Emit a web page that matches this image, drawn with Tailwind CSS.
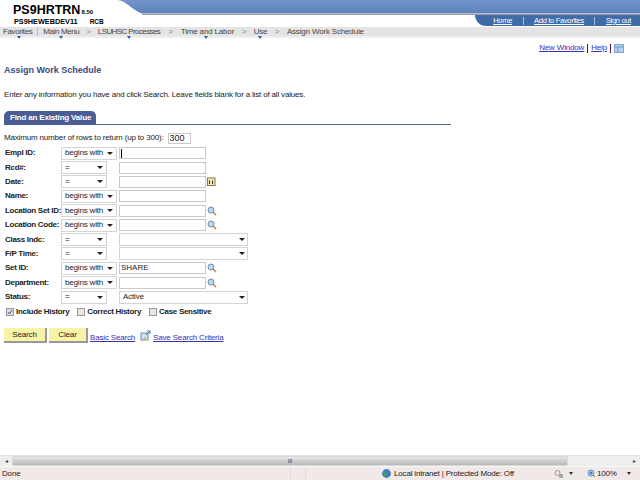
<!DOCTYPE html>
<html>
<head>
<meta charset="utf-8">
<script src="https://cdn.jsdelivr.net/npm/@tailwindcss/browser@4"></script>
</head>
<body class="m-0 bg-white">
<div class="w-[640px] h-[480px] overflow-hidden flex flex-col font-['Liberation_Sans',Arial,sans-serif] text-[8px] tracking-[-0.17px] text-[#222] relative">
  <!-- header -->
  <header class="h-[27px] relative shrink-0">
    <div class="absolute left-[112px] top-0 right-0 h-[15px]">
      <svg width="528" height="16" class="block"><defs><linearGradient id="g" x1="0" y1="0" x2="0" y2="1"><stop offset="0" stop-color="#7395ca"/><stop offset="0.5" stop-color="#668cc4"/><stop offset="1" stop-color="#5f82b6"/></linearGradient></defs><path d="M6 0 C 14 1 20 10 30 13.5 L528 13.5 L528 0 Z" fill="url(#g)"/><path d="M30 14.5 L528 14.5" stroke="#9a9aa8" stroke-width="1"/></svg>
    </div>
    <div class="absolute left-[13px] top-[3px] font-bold text-[12.5px] tracking-normal leading-[14px] text-black">PS9HRTRN<span class="text-[6px] ml-px">8.50</span></div>
    <div class="absolute left-[14px] top-[17px] font-bold text-[7.3px] tracking-normal leading-[9px] text-black flex gap-[12px]"><span>PS9HEWEBDEV11</span><span class="text-[6.5px]">RCB</span></div>
    <nav class="absolute left-[475px] top-[15px] w-[165px] h-[11px] bg-[#3f6ca6] rounded-bl-[11px] flex items-center justify-end pr-[9px] text-[7.5px] tracking-[-0.3px] leading-[10px] text-white whitespace-nowrap">
      <a class="underline">Home</a>
      <span class="w-px h-[8px] bg-[#a9c0dd] mx-[10.5px]"></span>
      <a class="underline">Add to Favorites</a>
      <span class="w-px h-[8px] bg-[#a9c0dd] mx-[10.5px]"></span>
      <a class="underline">Sign out</a>
    </nav>
  </header>
  <!-- breadcrumb -->
  <div class="h-[9px] shrink-0 bg-[#e4e4e4] border-b-[2px] border-[#eeeeee] box-content flex items-center pl-[3px] leading-[9px] text-[#444] whitespace-nowrap">
    <span class="relative tracking-[-0.4px]">Favorites<i class="absolute left-[14px] top-[9px] border-x-[2px] border-t-[3px] border-x-transparent border-t-[#2d5f9e]"></i></span>
    <span class="w-px h-[9px] bg-[#bbb] mx-[5px]"></span>
    <span class="relative tracking-[-0.4px]">Main Menu<i class="absolute left-[16px] top-[9px] border-x-[2px] border-t-[3px] border-x-transparent border-t-[#2d5f9e]"></i></span>
    <span class="mx-[7px] text-[#888]">&gt;</span>
    <span class="relative tracking-[-0.6px]">LSUHSC Processes<i class="absolute left-[29px] top-[9px] border-x-[2px] border-t-[3px] border-x-transparent border-t-[#2d5f9e]"></i></span>
    <span class="mx-[8px] text-[#888]">&gt;</span>
    <span class="relative">Time and Labor<i class="absolute left-[23px] top-[9px] border-x-[2px] border-t-[3px] border-x-transparent border-t-[#2d5f9e]"></i></span>
    <span class="mx-[7.5px] text-[#888]">&gt;</span>
    <span class="relative">Use<i class="absolute left-[4px] top-[9px] border-x-[2px] border-t-[3px] border-x-transparent border-t-[#2d5f9e]"></i></span>
    <span class="mx-[7.5px] text-[#888]">&gt;</span>
    <span>Assign Work Schedule</span>
  </div>
  <!-- main -->
  <main class="flex-1 min-h-0">
    <div class="h-[14px] mt-[3px] flex justify-end items-center pr-[16px] text-[#3a2fb0]">
      <a class="underline">New Window</a><span class="w-px h-[9px] bg-[#514] mx-[3px]"></span><a class="underline">Help</a><span class="w-px h-[9px] bg-[#514] mx-[3px]"></span>
      <svg width="10" height="9" viewBox="0 0 10 9"><rect x=".5" y=".5" width="9" height="8" fill="#b8d0ea" stroke="#7fa3cf"/><path d="M1 3H9M4 3V8" stroke="#6f97c9"/></svg>
    </div>
    <h1 class="ml-[4px] mt-[10px] font-bold text-[9px] tracking-normal leading-[11px] text-[#3a4a80]">Assign Work Schedule</h1>
    <p class="ml-[4px] mt-[13px] leading-[11px] text-[#222] whitespace-nowrap">Enter any information you have and click Search. Leave fields blank for a list of all values.</p>
    <div class="mt-[11px] ml-[4px] w-[447px] border-b border-[#5b6a95] h-[14px]">
      <div class="w-[92px] h-[14px] bg-[#4c5d96] rounded-t-[5px] rounded-br-[1px] flex items-center pl-[6px] font-bold text-white whitespace-nowrap">Find an Existing Value</div>
    </div>
    <div class="mt-[7px] ml-[4px] h-[12px] flex items-center whitespace-nowrap">Maximum number of rows to return (up to 300):<span class="ml-[4px] w-[23px] h-[11px] border border-[#c9c9c9] pl-[1px] flex items-center text-[9px] tracking-normal leading-[9px]">300</span></div>
    <form class="mt-[2px] ml-[5px] grid grid-cols-[56px_58px_1fr] auto-rows-[14.4px] items-center w-[260px] font-bold tracking-[-0.3px] leading-[10px] whitespace-nowrap">
      <label>Empl ID:</label><div class="w-[56px] h-[13px] border border-[#d4d4d4] flex items-center justify-between px-[3px] font-normal tracking-[-0.17px]">begins with<i class="border-x-[3px] border-t-[3px] border-x-transparent border-t-[#222]"></i></div><div class="flex items-center gap-[2px]"><span class="w-[87px] h-[12px] border border-[#c9c9c9] font-normal flex items-center"><span class="w-px h-[9px] bg-black ml-[1px]"></span></span></div>
      <label>Rcd#:</label><div class="w-[46px] h-[13px] border border-[#d4d4d4] flex items-center justify-between px-[3px] font-normal">=<i class="border-x-[3px] border-t-[3px] border-x-transparent border-t-[#222]"></i></div><div><span class="block w-[87px] h-[12px] border border-[#c9c9c9]"></span></div>
      <label>Date:</label><div class="w-[46px] h-[13px] border border-[#d4d4d4] flex items-center justify-between px-[3px] font-normal">=<i class="border-x-[3px] border-t-[3px] border-x-transparent border-t-[#222]"></i></div><div class="flex items-center gap-[1px]"><span class="w-[87px] h-[12px] border border-[#c9c9c9]"></span><svg width="9" height="9" viewBox="0 0 9 9"><rect x=".5" y="1" width="7.5" height="7.5" fill="#f0e6b8" stroke="#8a7a3a"/><path d="M2.5 3.5V7M5.5 3.5V7" stroke="#333"/></svg></div>
      <label>Name:</label><div class="w-[56px] h-[13px] border border-[#d4d4d4] flex items-center justify-between px-[3px] font-normal tracking-[-0.17px]">begins with<i class="border-x-[3px] border-t-[3px] border-x-transparent border-t-[#222]"></i></div><div><span class="block w-[87px] h-[12px] border border-[#c9c9c9]"></span></div>
      <label>Location Set ID:</label><div class="w-[56px] h-[13px] border border-[#d4d4d4] flex items-center justify-between px-[3px] font-normal tracking-[-0.17px]">begins with<i class="border-x-[3px] border-t-[3px] border-x-transparent border-t-[#222]"></i></div><div class="flex items-center gap-[1px]"><span class="w-[87px] h-[12px] border border-[#c9c9c9]"></span><svg width="10" height="10" viewBox="0 0 10 10"><circle cx="4" cy="4" r="3" fill="#bcd6f0" stroke="#6f8fb5"/><path d="M6 6L9 9" stroke="#c08a3a" stroke-width="1.6"/></svg></div>
      <label>Location Code:</label><div class="w-[56px] h-[13px] border border-[#d4d4d4] flex items-center justify-between px-[3px] font-normal tracking-[-0.17px]">begins with<i class="border-x-[3px] border-t-[3px] border-x-transparent border-t-[#222]"></i></div><div class="flex items-center gap-[1px]"><span class="w-[87px] h-[12px] border border-[#c9c9c9]"></span><svg width="10" height="10" viewBox="0 0 10 10"><circle cx="4" cy="4" r="3" fill="#bcd6f0" stroke="#6f8fb5"/><path d="M6 6L9 9" stroke="#c08a3a" stroke-width="1.6"/></svg></div>
      <label>Class Indc:</label><div class="w-[46px] h-[13px] border border-[#d4d4d4] flex items-center justify-between px-[3px] font-normal">=<i class="border-x-[3px] border-t-[3px] border-x-transparent border-t-[#222]"></i></div><div class="w-[129px] h-[13px] border border-[#d4d4d4] flex items-center justify-end px-[2px]"><i class="border-x-[3px] border-t-[3px] border-x-transparent border-t-[#222]"></i></div>
      <label>F/P Time:</label><div class="w-[46px] h-[13px] border border-[#d4d4d4] flex items-center justify-between px-[3px] font-normal">=<i class="border-x-[3px] border-t-[3px] border-x-transparent border-t-[#222]"></i></div><div class="w-[129px] h-[13px] border border-[#d4d4d4] flex items-center justify-end px-[2px]"><i class="border-x-[3px] border-t-[3px] border-x-transparent border-t-[#222]"></i></div>
      <label>Set ID:</label><div class="w-[56px] h-[13px] border border-[#d4d4d4] flex items-center justify-between px-[3px] font-normal tracking-[-0.17px]">begins with<i class="border-x-[3px] border-t-[3px] border-x-transparent border-t-[#222]"></i></div><div class="flex items-center gap-[1px]"><span class="w-[87px] h-[12px] border border-[#c9c9c9] font-normal tracking-normal pl-[1px] flex items-center">SHARE</span><svg width="10" height="10" viewBox="0 0 10 10"><circle cx="4" cy="4" r="3" fill="#bcd6f0" stroke="#6f8fb5"/><path d="M6 6L9 9" stroke="#c08a3a" stroke-width="1.6"/></svg></div>
      <label>Department:</label><div class="w-[56px] h-[13px] border border-[#d4d4d4] flex items-center justify-between px-[3px] font-normal tracking-[-0.17px]">begins with<i class="border-x-[3px] border-t-[3px] border-x-transparent border-t-[#222]"></i></div><div class="flex items-center gap-[1px]"><span class="w-[87px] h-[12px] border border-[#c9c9c9]"></span><svg width="10" height="10" viewBox="0 0 10 10"><circle cx="4" cy="4" r="3" fill="#bcd6f0" stroke="#6f8fb5"/><path d="M6 6L9 9" stroke="#c08a3a" stroke-width="1.6"/></svg></div>
      <label>Status:</label><div class="w-[46px] h-[13px] border border-[#d4d4d4] flex items-center justify-between px-[3px] font-normal">=<i class="border-x-[3px] border-t-[3px] border-x-transparent border-t-[#222]"></i></div><div class="w-[129px] h-[13px] border border-[#d4d4d4] flex items-center justify-between px-[2px] font-normal tracking-[-0.17px]"><span class="pl-[1px]">Active</span><i class="border-x-[3px] border-t-[3px] border-x-transparent border-t-[#222]"></i></div>
    </form>
    <div class="ml-[6px] mt-[2px] h-[12px] flex items-center font-bold tracking-[-0.3px] whitespace-nowrap">
      <span class="w-[8px] h-[8px] border border-[#999] bg-[#ddd] flex items-center justify-center mr-[2px]"><svg width="6" height="6" viewBox="0 0 6 6"><path d="M1 3L2.5 5L5 1" fill="none" stroke="#3a5a9a"/></svg></span>Include History
      <span class="w-[8px] h-[8px] border border-[#999] bg-[#e6e6e6] ml-[8px] mr-[2px]"></span>Correct History
      <span class="w-[8px] h-[8px] border border-[#999] bg-[#e6e6e6] ml-[8px] mr-[2px]"></span>Case Sensitive
    </div>
    <div class="ml-[4px] mt-[10px] flex items-start whitespace-nowrap">
      <span class="w-[43px] h-[15px] bg-[#f7f4a8] border-r-2 border-b-2 border-[#999] flex items-center justify-center text-[#222] mr-[2px]">Search</span>
      <span class="w-[39px] h-[15px] bg-[#f7f4a8] border-r-2 border-b-2 border-[#999] flex items-center justify-center text-[#222]">Clear</span>
      <a class="underline text-[#3a2fb0] ml-[2px] mt-[4px]">Basic Search</a>
      <svg class="ml-[5px] mt-[2px]" width="11" height="11" viewBox="0 0 11 11"><rect x="1" y="3" width="7" height="7" fill="#cfe0f2" stroke="#6f8fb5"/><path d="M6 5L10 1M7 1H10V4" fill="none" stroke="#4a78ad"/><path d="M3 10L6 7" stroke="#c9a93a"/></svg>
      <a class="underline text-[#3a2fb0] ml-[2px] mt-[4px]">Save Search Criteria</a>
    </div>
  </main>
  <!-- scrollbar -->
  <div class="h-[11px] shrink-0 bg-[#eeeeee] flex items-center border-t border-[#e2e2e2] text-[#444]">
    <span class="w-[12px] text-center text-[6px] leading-none">◂</span>
    <div class="w-[556px] h-[10px] rounded-[1px] border border-[#d8d8d8] bg-gradient-to-b from-[#e6e6e6] to-[#b8b8b8] flex items-center justify-center"><span class="text-[6px] leading-none">III</span></div>
    <span class="flex-1"></span>
    <span class="w-[12px] text-center text-[6px] leading-none">▸</span>
  </div>
  <!-- status -->
  <footer class="h-[14px] shrink-0 bg-[#f1e8e8] flex items-center text-[#222] border-t border-[#f8f8f8] whitespace-nowrap">
    <span class="pl-[2px] w-[290px]">Done</span>
    <span class="w-[15px] h-full border-l border-[#ddd]"></span>
    <span class="w-[76px] h-full border-l border-[#ddd]"></span>
    <svg width="11" height="11" viewBox="0 0 10 10"><circle cx="5" cy="5" r="4" fill="#3f7fbf"/><path d="M2 3L5 5L3 8" fill="#4aa54a"/></svg>
    <span class="ml-[2px] w-[122px]">Local intranet | Protected Mode: Off</span>
    <svg class="ml-[38px]" width="10" height="10" viewBox="0 0 10 10"><circle cx="3.5" cy="4" r="2.5" fill="none" stroke="#999"/><rect x="5" y="5" width="4" height="4" fill="#aaa"/></svg>
    <i class="ml-[5px] border-x-[2px] border-t-[3px] border-x-transparent border-t-[#333]"></i>
    <svg class="ml-[14px]" width="9" height="9" viewBox="0 0 9 9"><circle cx="4" cy="4" r="3" fill="#bcd6f0" stroke="#5f8fc5"/><path d="M2.5 4H5.5M4 2.5V5.5" stroke="#2d5f9e"/><path d="M6 6L8 8" stroke="#777"/></svg>
    <span class="ml-[1px]">100%</span>
    <i class="ml-[10px] border-x-[2px] border-t-[3px] border-x-transparent border-t-[#333]"></i>
  </footer>
</div>
</body>
</html>
